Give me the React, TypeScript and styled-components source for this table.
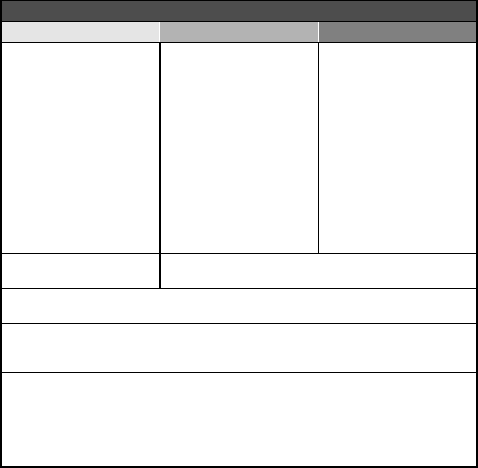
import React from "react";
import styled, { createGlobalStyle } from "styled-components";

const GlobalStyle = createGlobalStyle`
    html, body {
        margin: 0;
        padding: 0;
        background: #fff;
        font-family: "Liberation Sans", Arial, sans-serif;
    }
`;

const Frame = styled.div`
    box-sizing: border-box;
    width: 478px;
    height: 468px;
    display: flex;
    flex-direction: column;
    border: 2px solid #000;
    border-top-width: 1px;
    background: #fff;
`;

const TitleBar = styled.div`
    height: 20px;
    flex: none;
    background-color: #4d4d4d;
    border-bottom: 1px solid #000;
`;

const Tabs = styled.div`
    height: 20px;
    flex: none;
    display: grid;
    grid-template-columns: 157px 158px 157px;
    column-gap: 1px;
    background-color: #fff;
    border-bottom: 1px solid #000;
`;

const Tab = styled.div<{ $shade: string }>`
    background-color: ${(p) => p.$shade};
`;

const Columns = styled.div`
    height: 210px;
    flex: none;
    display: flex;
    border-bottom: 1px solid #000;
`;

const Column = styled.div<{ $edge?: number }>`
    width: 157px;
    flex: none;
    border-right: ${(p) => (p.$edge ? `${p.$edge}px solid #000` : "none")};
`;

const Row = styled.div<{ $h: number; $last?: boolean }>`
    height: ${(p) => p.$h}px;
    flex: none;
    display: flex;
    border-bottom: ${(p) => (p.$last ? "none" : "1px solid #000")};
`;

const SideCell = styled.div`
    width: 157px;
    flex: none;
    border-right: 2px solid #000;
`;

const Cell = styled.div`
    flex: 1;
`;

const App = () => {
    return (
        <>
            <GlobalStyle />
            <Frame>
                <TitleBar />
                <Tabs>
                    <Tab $shade="#e5e5e5" />
                    <Tab $shade="#b3b3b3" />
                    <Tab $shade="#808080" />
                </Tabs>
                <Columns>
                    <Column $edge={2} />
                    <Column $edge={1} />
                    <Column />
                </Columns>
                <Row $h={34}>
                    <SideCell />
                    <Cell />
                </Row>
                <Row $h={34}>
                    <Cell />
                </Row>
                <Row $h={48}>
                    <Cell />
                </Row>
                <Row $h={93} $last>
                    <Cell />
                </Row>
            </Frame>
        </>
    );
};

export default App;
